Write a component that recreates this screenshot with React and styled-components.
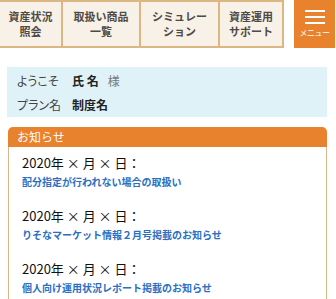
import styled, { createGlobalStyle } from "styled-components";

const GlobalStyle = createGlobalStyle`
  body {
    margin: 0;
    background: #fff;
    font-family: "Noto Sans CJK JP", "Noto Sans", sans-serif;
  }
`;

const tabs = [
  ["資産状況", "照会"],
  ["取扱い商品", "一覧"],
  ["シミュレー", "ション"],
  ["資産運用", "サポート"],
];

const news = [
  "配分指定が行われない場合の取扱い",
  "りそなマーケット情報２月号掲載のお知らせ",
  "個人向け運用状況レポート掲載のお知らせ",
];

const App = () => {
  return (
    <Page>
      <GlobalStyle />
      <Header>
        <TabBar>
          {tabs.map((t, i) => (
            <Tab key={i}>
              <TabLine>{t[0]}</TabLine>
              <TabLine>{t[1]}</TabLine>
            </Tab>
          ))}
        </TabBar>
        <MenuButton>
          <Burger>
            <span />
            <span />
            <span />
          </Burger>
          <MenuLabel>メニュー</MenuLabel>
        </MenuButton>
      </Header>

      <Welcome>
        <Label>ようこそ</Label>
        <Value>
          氏 名<Honor>様</Honor>
        </Value>
        <Label>プラン名</Label>
        <Value>制度名</Value>
      </Welcome>

      <Notice>
        <NoticeHead>お知らせ</NoticeHead>
        <NoticeBody>
          {news.map((n, i) => (
            <NewsItem key={i}>
              <NewsDate>2020年 × 月 × 日：</NewsDate>
              <NewsLink href="#">{n}</NewsLink>
            </NewsItem>
          ))}
        </NoticeBody>
      </Notice>
    </Page>
  );
};

export default App;

const Page = styled.div`
  width: 336px;
  height: 299px;
  overflow: hidden;
`;

const Header = styled.div`
  display: flex;
  align-items: flex-start;
  justify-content: space-between;
  height: 48px;
`;

const TabBar = styled.div`
  display: grid;
  grid-template-columns: 63px 78px 79px 64px;
  height: 48px;
  background: #f7f1e7;
  border-top: 2px solid #dcb783;
  border-bottom: 2px solid #dcb783;
  box-sizing: border-box;
`;

const Tab = styled.div`
  display: flex;
  flex-direction: column;
  align-items: center;
  justify-content: center;
  text-align: center;
  border-right: 2px solid #dcb783;
  color: #4f4a44;
`;

const TabLine = styled.div`
  font-size: 11px;
  line-height: 15px;
  font-weight: 700;
  white-space: nowrap;
`;

const MenuButton = styled.div`
  width: 41px;
  height: 48px;
  margin-right: 1px;
  background: #e8822c;
  display: flex;
  flex-direction: column;
  align-items: center;
  justify-content: center;
  gap: 4px;
`;

const Burger = styled.div`
  display: flex;
  flex-direction: column;
  gap: 4px;
  span {
    display: block;
    width: 20px;
    height: 2px;
    background: #fff;
  }
`;

const MenuLabel = styled.div`
  color: #fff;
  font-size: 8px;
  line-height: 10px;
  letter-spacing: -0.5px;
`;

const Welcome = styled.div`
  margin: 19px 9px 0 7px;
  background: #dff2f8;
  padding: 5px 10px 0;
  height: 50px;
  box-sizing: border-box;
  display: grid;
  grid-template-columns: 55px 1fr;
  grid-auto-rows: 18px;
  row-gap: 6px;
  align-content: start;
  font-size: 12px;
  line-height: 18px;
  font-feature-settings: "palt";
`;

const Label = styled.div`
  color: #444;
`;

const Value = styled.div`
  font-weight: 700;
  color: #222;
  font-feature-settings: normal;
`;

const Honor = styled.span`
  font-weight: 400;
  color: #777;
  margin-left: 9px;
`;

const Notice = styled.div`
  margin: 10px 9px 0 8px;
`;

const NoticeHead = styled.div`
  background: #e8822c;
  color: #fff;
  font-size: 12px;
  line-height: 20px;
  padding: 0 9px;
  border-radius: 5px 5px 0 0;
`;

const NoticeBody = styled.div`
  border: 1px solid #d9b68a;
  border-top: none;
  padding: 7px 0 0 13px;
`;

const NewsItem = styled.div`
  height: 53px;
  display: flex;
  flex-direction: column;
`;

const NewsDate = styled.div`
  font-size: 13px;
  line-height: 18px;
  color: #111;
`;

const NewsLink = styled.a`
  margin-top: 3px;
  font-size: 10px;
  line-height: 14px;
  font-weight: 700;
  color: #2a6fc2;
  text-decoration: none;
`;
